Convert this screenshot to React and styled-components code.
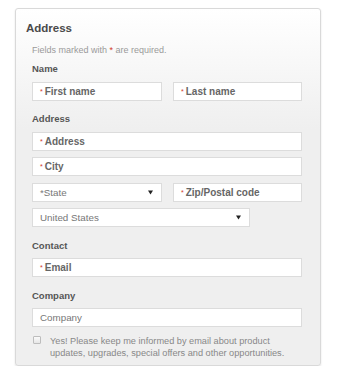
import React from 'react';
import styled, { createGlobalStyle } from 'styled-components';

const GlobalStyle = createGlobalStyle`
  body {
    margin: 0;
    background: #fff;
    font-family: "Liberation Sans", Arial, sans-serif;
  }
`;

// Outer panel with soft top gradient
const Panel = styled.section`
  box-sizing: border-box;
  width: 306px;
  height: 358px;
  margin: 8px 0 0 15px;
  border: 1px solid #d9d9d9;
  border-radius: 3px;
  box-shadow: 0 1px 2px rgba(0, 0, 0, 0.12);
  background: linear-gradient(#ffffff 0px, #efefef 120px, #efefef 100%);
  padding: 12px 18px 0 10px;
`;

const Title = styled.h2`
  margin: 0;
  font-size: 11.5px;
  line-height: 14px;
  font-weight: bold;
  color: #4a4a4a;
`;

const Body = styled.div`
  padding-left: 6px;
`;

const Note = styled.p`
  margin: 9px 0 0;
  font-size: 9px;
  line-height: 12px;
  color: #9a9a9a;
`;

const Req = styled.span`
  color: #d23a2a;
  font-size: ${(p) => (p.small ? '7px' : 'inherit')};
  font-weight: normal;
  margin-right: ${(p) => (p.small ? '2px' : '0')};
  vertical-align: ${(p) => (p.small ? '1px' : 'baseline')};
`;

const Section = styled.div`
  margin-top: ${(p) => p.top || 12.5}px;
`;

const Label = styled.div`
  font-size: 9.5px;
  line-height: 12px;
  font-weight: bold;
  color: #555;
  margin-bottom: 6.5px;
`;

const Stack = styled.div`
  display: flex;
  flex-direction: column;
  gap: 6.5px;
`;

const Row = styled.div`
  display: flex;
  gap: 11px;
`;

const Field = styled.div`
  box-sizing: border-box;
  display: flex;
  align-items: center;
  justify-content: space-between;
  width: ${(p) => p.w || '270px'};
  height: 19px;
  padding: 0 8px 0 7px;
  background: #fff;
  border: 1px solid #dcdcdc;
  font-size: ${(p) => (p.strong ? '10px' : '9.8px')};
  font-weight: ${(p) => (p.strong ? 'bold' : 'normal')};
  color: ${(p) => (p.strong ? '#666' : '#777')};
  white-space: nowrap;
`;

const Arrow = () => (
  <svg width="5" height="5" viewBox="0 0 5 5">
    <path d="M0 0.5 L5 0.5 L2.5 4.5 Z" fill="#222" />
  </svg>
);

const Optin = styled.label`
  display: flex;
  align-items: flex-start;
  gap: 9px;
  margin-top: 8px;
  padding-left: 1px;
  font-size: 9.2px;
  line-height: 12px;
  color: #888;
`;

const Box = styled.span`
  flex: none;
  box-sizing: border-box;
  width: 8px;
  height: 8px;
  margin-top: 1px;
  border: 1px solid #bdbdbd;
  border-radius: 1px;
  background: linear-gradient(#fafafa, #e6e6e6);
`;

const Required = ({ text, w }) => (
  <Field strong w={w}>
    <span>
      <Req small>*</Req>
      {text}
    </span>
  </Field>
);

const Select = ({ text, w }) => (
  <Field w={w}>
    <span>{text}</span>
    <Arrow />
  </Field>
);

const App = () => (
  <>
    <GlobalStyle />
    <Panel>
      <Title>Address</Title>
      <Body>
        <Note>
          Fields marked with <Req>*</Req> are required.
        </Note>
        <Section top={7}>
          <Label>Name</Label>
          <Row>
            <Required text="First name" w="130px" />
            <Required text="Last name" w="129px" />
          </Row>
        </Section>
        <Section>
          <Label>Address</Label>
          <Stack>
            <Required text="Address" />
            <Required text="City" />
            <Row>
              <Select text="*State" w="130px" />
              <Required text="Zip/Postal code" w="129px" />
            </Row>
            <Select text="United States" w="218px" />
          </Stack>
        </Section>
        <Section>
          <Label>Contact</Label>
          <Required text="Email" />
        </Section>
        <Section>
          <Label>Company</Label>
          <Field>Company</Field>
        </Section>
        <Optin>
          <Box />
          <span>
            Yes! Please keep me informed by email about product updates, upgrades, special offers and other
            opportunities.
          </span>
        </Optin>
      </Body>
    </Panel>
  </>
);

export default App;
